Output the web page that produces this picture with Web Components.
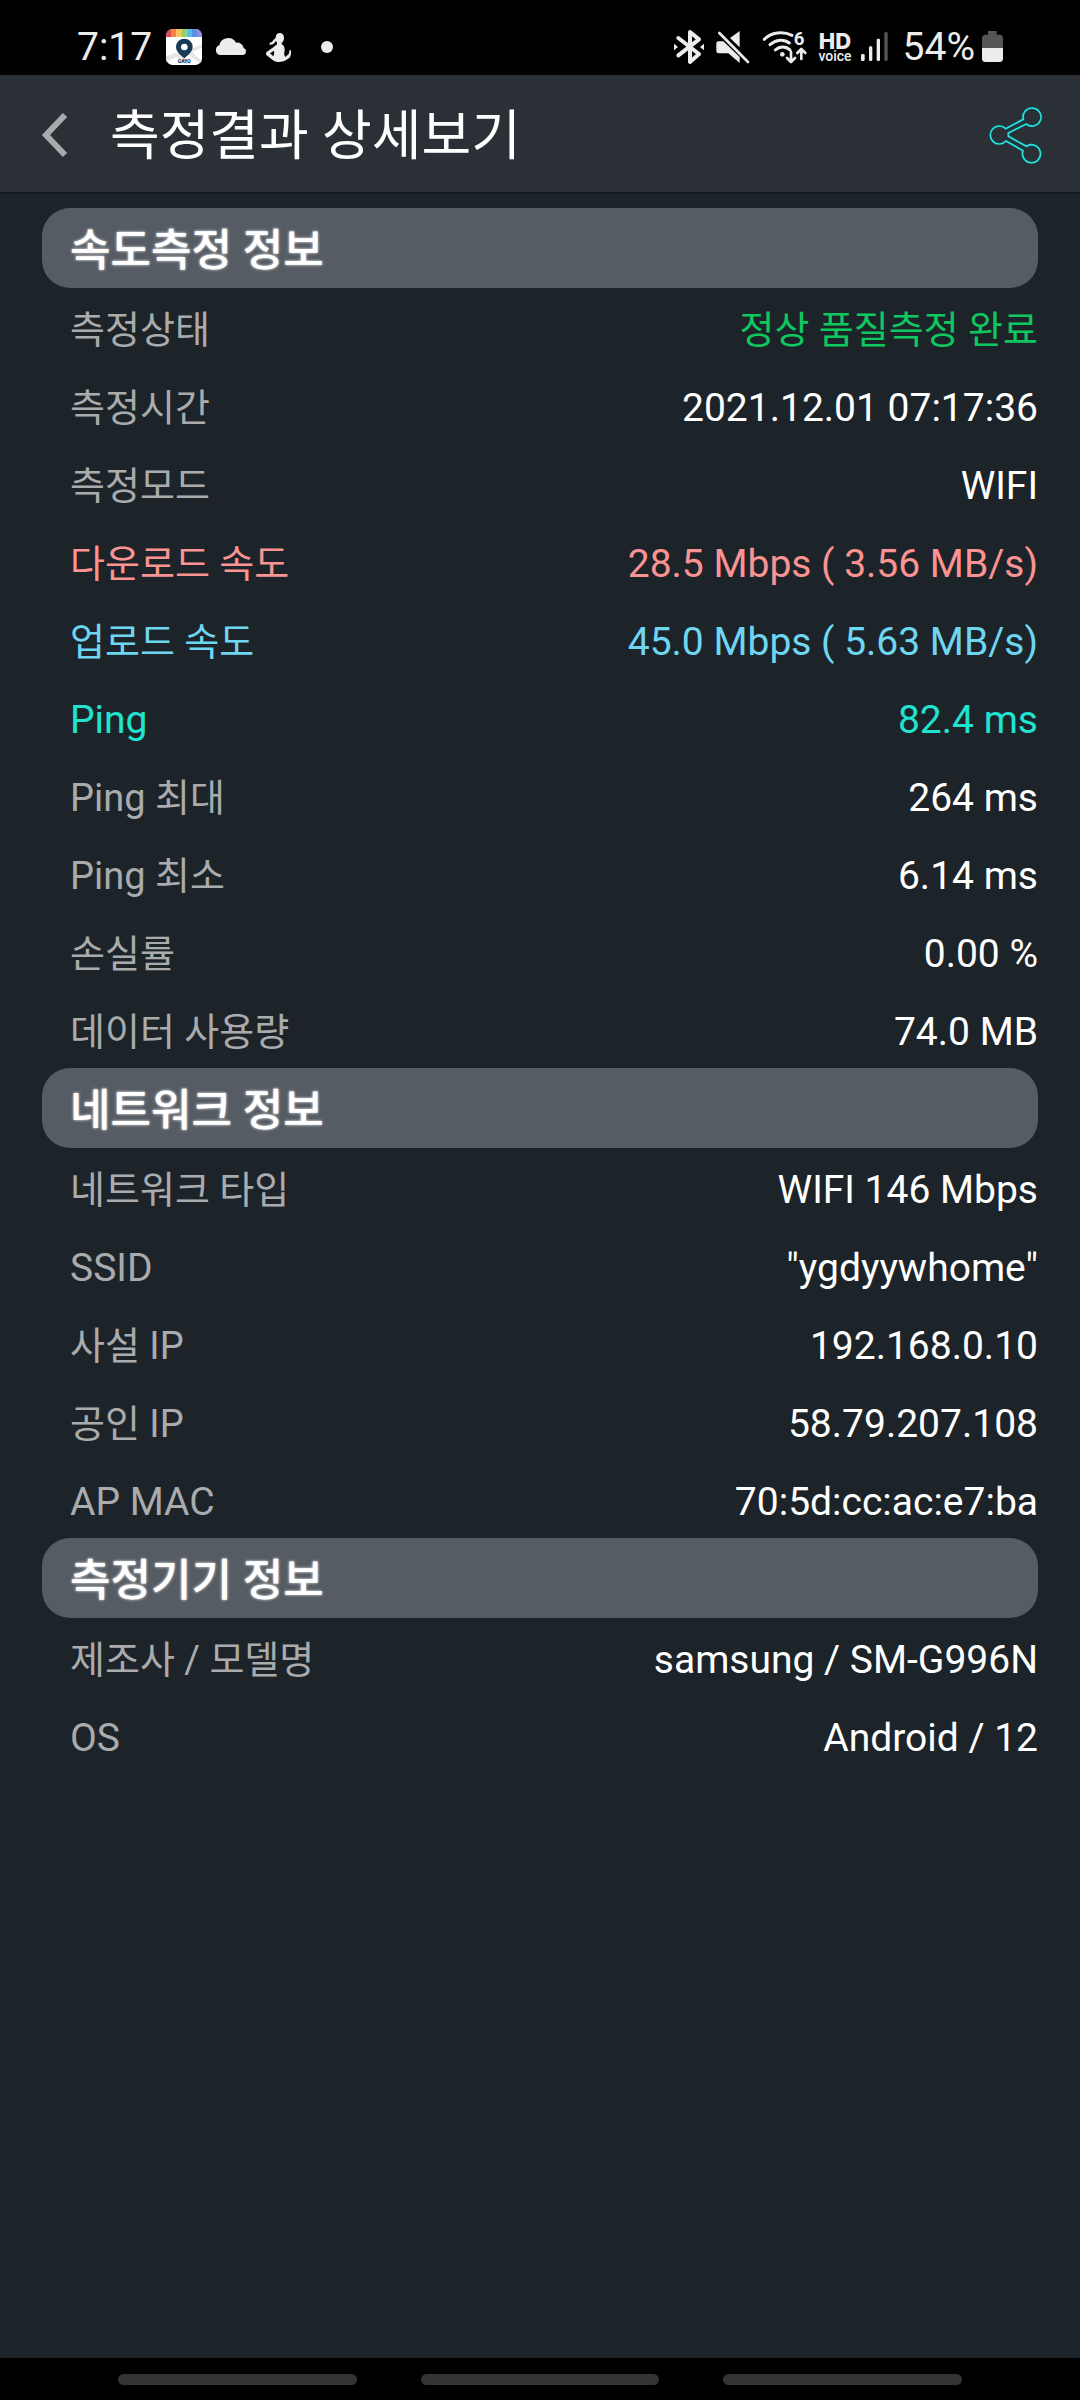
<!DOCTYPE html>
<html lang="ko">
<head>
<meta charset="utf-8">
<meta name="viewport" content="width=device-width, initial-scale=1">
<title>측정결과 상세보기</title>
<style>
    body{
        margin:0;
        background:#1d2429;
        color:#fff;
        font-family:Roboto, "Noto Sans CJK KR", sans-serif;
    }
</style>
</head>
<body>
<app-screen>
    <status-bar slot="top"></status-bar>
    <title-bar slot="top">측정결과 상세보기</title-bar>

    <info-section heading="속도측정 정보">
        <info-row label="측정상태" tone="ok">정상 품질측정 완료</info-row>
        <info-row label="측정시간">2021.12.01 07:17:36</info-row>
        <info-row label="측정모드">WIFI</info-row>
        <info-row label="다운로드 속도" tone="down">28.5 Mbps ( 3.56 MB/s)</info-row>
        <info-row label="업로드 속도" tone="up">45.0 Mbps ( 5.63 MB/s)</info-row>
        <info-row label="Ping" tone="ping">82.4 ms</info-row>
        <info-row label="Ping 최대">264 ms</info-row>
        <info-row label="Ping 최소">6.14 ms</info-row>
        <info-row label="손실률">0.00 %</info-row>
        <info-row label="데이터 사용량">74.0 MB</info-row>
    </info-section>

    <info-section heading="네트워크 정보">
        <info-row label="네트워크 타입">WIFI 146 Mbps</info-row>
        <info-row label="SSID">"ygdyywhome"</info-row>
        <info-row label="사설 IP">192.168.0.10</info-row>
        <info-row label="공인 IP">58.79.207.108</info-row>
        <info-row label="AP MAC">70:5d:cc:ac:e7:ba</info-row>
    </info-section>

    <info-section heading="측정기기 정보">
        <info-row label="제조사 / 모델명">samsung / SM-G996N</info-row>
        <info-row label="OS">Android / 12</info-row>
    </info-section>

    <nav-hints slot="bottom"></nav-hints>
</app-screen>

<script>
class BaseElement extends HTMLElement{
    constructor(){
        super()
        this.attachShadow({mode:'open'})
    }

    connectedCallback(){
        this.render()
    }

    render(){
        this.shadowRoot.innerHTML = `${this.styles()} ${this.template()}`;
    }
}

class AppScreen extends BaseElement{
    styles(){
        return `
        <style>
            :host{
                display:flex;
                flex-direction:column;
                min-height:100vh;
            }
            main{
                flex:1;
                padding:14px 42px;
            }
        </style>
        `
    }
    template(){
        return `
        <slot name="top"></slot>
        <main><slot></slot></main>
        <slot name="bottom"></slot>
        `
    }
}

class StatusBar extends BaseElement{
    styles(){
        return `
        <style>
            :host{
                display:flex;
                justify-content:space-between;
                box-sizing:border-box;
                height:75px;
                padding:19px 77px 0;
                background:#000;
                color:#ececec;
                font-size:39px;
                line-height:56px;
            }
            .group{
                display:flex;
                align-items:center;
            }
            .left{
                gap:12px;
            }
            .left span{
                padding-right:2px;
            }
            .right{
                gap:6px;
            }
            svg{
                display:block;
                overflow:visible;
                height:36px;
                fill:#ececec;
            }
            .line{
                fill:none;
                stroke:#ececec;
            }
        </style>
        `
    }
    template(){
        return `
        <div class="group left">
            <span>7:17</span>
            <svg width="36" viewBox="318 54 108 108" aria-hidden="true">
                <clipPath id="app"><rect x="318" y="54" width="108" height="108" rx="20"/></clipPath>
                <g clip-path="url(#app)">
                    <rect x="318" y="54" width="108" height="108" fill="#fff"/>
                    <path d="M318 136l36-12 40 34h-20l-24-20-32 16zM384 118l42-18v10l-30 14 30 26v12l-50-38z" fill="#e4e6e8"/>
                    <rect x="318" y="54" width="18" height="24" fill="#d94a52"/>
                    <rect x="333" y="54" width="16" height="24" fill="#f4824a"/>
                    <rect x="349" y="54" width="15" height="24" fill="#fbc14f"/>
                    <rect x="364" y="54" width="16" height="24" fill="#94cf61"/>
                    <rect x="380" y="54" width="16" height="24" fill="#56bfe0"/>
                    <rect x="396" y="54" width="15" height="24" fill="#5593e4"/>
                    <rect x="411" y="54" width="15" height="24" fill="#9c86e6"/>
                </g>
                <path fill="#173a56" fill-rule="evenodd" d="M373 83a25 25 0 0 0-25 25c0 13 13 24 25 34c12-10 25-21 25-34a25 25 0 0 0-25-25zM373 98a10 10 0 1 1 0 20a10 10 0 1 1 0-20z"/>
                <text x="373" y="156" fill="#173a56" font-size="15" font-weight="900" text-anchor="middle">GAYO</text>
            </svg>
            <svg width="35" viewBox="462 54 105 108" aria-hidden="true">
                <path d="M480 132a15 15 0 0 1-2-29a27 27 0 0 1 50-8a20 20 0 0 1 23 16a11 11 0 0 1-1 21z"/>
            </svg>
            <svg width="34" viewBox="603 54 102 108" aria-hidden="true">
                <path d="M647 80c0-8 5-14 12-14c8 0 13 6 13 14c0 7-2 12-7 15v5c7 3 9 9 9 16c0 6-2 10-1 16l3 6l10-9c2-4 2-7 2-11h5c1 8 0 16-4 22l-12 8c-12 7-30 7-40-2l-17-13c-3-3-3-7 0-10l22-16l9-7v-6c-2-1-3-4-3-5c-4 8-11 13-20 12c1-6 3-8 8-8c2-4 6-8 11-13zM630 127l10 9c2-4 3-10 2-17z" fill-rule="evenodd"/>
            </svg>
            <svg width="40" viewBox="741 54 120 108" aria-hidden="true">
                <circle cx="801" cy="108" r="18"/>
            </svg>
        </div>
        <div class="group right">
            <svg width="35" viewBox="39 57 105 108" aria-hidden="true">
                <path class="line" stroke-width="12" stroke-linejoin="round" stroke-linecap="round" d="M55 84l62 48l-27 24V66l27 22l-62 48"/>
                <path d="M42 101l12 10l-12 10zM132 101l-12 10l12 10z"/>
            </svg>
            <svg width="41" viewBox="162 57 123 108" aria-hidden="true">
                <path d="M176 94h14l49 47v18l-34-29h-29c-4 0-7-2-7-6v-24c0-4 3-6 7-6zM239 63v49l-29-28z"/>
                <path class="line" stroke-width="8" stroke-linecap="round" d="M178 69l86 87"/>
            </svg>
            <svg width="49" viewBox="303 57 147 108" aria-hidden="true">
                <path class="line" stroke-width="9" stroke-linecap="round" d="M313 88c20-21 56-25 83-12M330 104c18-16 42-18 58-5M346 120c13-12 32-12 44 0"/>
                <circle cx="367" cy="133" r="7"/>
                <path class="line" stroke-width="8" stroke-linecap="round" stroke-linejoin="round" d="M393 126v29M381 144l12 12l12-12M424 147v-28M412 129l12-12l12 12"/>
                <text x="417" y="105" font-size="56" font-weight="700" text-anchor="middle">6</text>
            </svg>
            <svg width="38" viewBox="468 57 114 108" aria-hidden="true">
                <text x="525" y="117" font-size="66" font-weight="800" text-anchor="middle" font-family="Inter">HD</text>
                <text x="525" y="153" font-size="42" font-weight="500" text-anchor="middle" font-family="Roboto">voice</text>
            </svg>
            <svg width="37" viewBox="600 57 111 108" aria-hidden="true">
                <rect x="603" y="132" width="11" height="21" rx="4"/>
                <rect x="627" y="109" width="10" height="44" rx="4"/>
                <rect x="650" y="86" width="10" height="67" rx="4"/>
                <rect x="673" y="66" width="10" height="87" rx="4" fill="#555"/>
            </svg>
            <span>54%</span>
            <svg width="22" viewBox="963 57 66 108" aria-hidden="true">
                <path fill="#555" d="M984 63h26v11h9c6 0 10 4 10 10v30h-63V84c0-6 4-10 10-10h8z"/>
                <path d="M966 114h63v32c0 6-4 10-10 10h-43c-6 0-10-4-10-10z"/>
            </svg>
        </div>
        `
    }
}

class TitleBar extends BaseElement{
    styles(){
        return `
        <style>
            :host{
                display:block;
                background:#2b2f36;
                border-bottom:2px solid #15181c;
            }
            header{
                display:flex;
                align-items:center;
                box-sizing:border-box;
                height:117px;
                padding:2px 38px 0 42px;
            }
            h1{
                flex:1;
                margin:0;
                padding:4px 0 0 42px;
                font-size:54px;
                font-weight:400;
                line-height:80px;
            }
            button{
                padding:0;
                border:0;
                background:none;
            }
            svg{
                display:block;
                overflow:visible;
                fill:none;
            }
        </style>
        `
    }
    template(){
        return `
        <header>
            <button type="button" aria-label="뒤로">
                <svg width="26" height="44" viewBox="0 0 26 44"><path d="M23 2L4 22L23 42" stroke="#a7abae" stroke-width="6"/></svg>
            </button>
            <h1><slot></slot></h1>
            <button type="button" aria-label="공유">
                <svg width="52" height="54" viewBox="150 113 156 162" stroke-linejoin="round">
                    <path d="M197 175L250 147A27 27 0 1 1 259 161L205 188V198L259 228A27 27 0 1 1 249 241L198 212A27 27 0 1 1 197 175Z" stroke="#10494e" stroke-width="9"/>
                    <path d="M197 175L250 147A27 27 0 1 1 259 161L205 188V198L259 228A27 27 0 1 1 249 241L198 212A27 27 0 1 1 197 175Z" stroke="#2fe0dc" stroke-width="5"/>
                </svg>
            </button>
        </header>
        `
    }
}

class InfoSection extends BaseElement{
    styles(){
        return `
        <style>
            :host{
                display:block;
            }
            h2{
                margin:0;
                padding:6px 0 0 28px;
                border-radius:28px;
                background:#555c63;
                font-size:44px;
                font-weight:500;
                line-height:74px;
                text-shadow:0 0 3px #fff;
            }
        </style>
        `
    }
    template(){
        return `
        <h2>${this.getAttribute('heading')}</h2>
        <slot></slot>
        `
    }
}

class InfoRow extends BaseElement{
    styles(){
        return `
        <style>
            :host{
                --label:#a9abad;
                --value:#fff;
                display:block;
            }
            :host([tone="ok"]){ --value:#0fc75f; }
            :host([tone="down"]){ --label:#fa9392; --value:#fa9392; }
            :host([tone="up"]){ --label:#6fd6f2; --value:#6fd6f2; }
            :host([tone="ping"]){ --label:#20e3d0; --value:#20e3d0; }
            dl{
                display:flex;
                justify-content:space-between;
                margin:0;
                padding:6px 0 0 28px;
                font-size:39px;
                line-height:72px;
            }
            dt{
                color:var(--label);
            }
            dd{
                margin:0;
                color:var(--value);
            }
            .hangul{
                font-size:38px;
            }
        </style>
        `
    }
    template(){
        const label = this.getAttribute('label')
        return `
        <dl>
            <dt class="${this.script(label)}">${label}</dt>
            <dd class="${this.script(this.textContent)}"><slot></slot></dd>
        </dl>
        `
    }

    // hangul looks bigger than latin at the same size
    script(text){
        return /[가-힣]/.test(text) ? 'hangul' : 'latin'
    }
}

class NavHints extends BaseElement{
    styles(){
        return `
        <style>
            :host{
                display:flex;
                align-items:center;
                gap:64px;
                height:42px;
                padding:0 118px;
                background:#000;
            }
            span{
                flex:1;
                height:11px;
                border-radius:6px;
                background:#343434;
            }
        </style>
        `
    }
    template(){
        return `<span></span><span></span><span></span>`
    }
}

window.customElements.define('app-screen',AppScreen);
window.customElements.define('status-bar',StatusBar);
window.customElements.define('title-bar',TitleBar);
window.customElements.define('info-section',InfoSection);
window.customElements.define('info-row',InfoRow);
window.customElements.define('nav-hints',NavHints);
</script>
</body>
</html>
